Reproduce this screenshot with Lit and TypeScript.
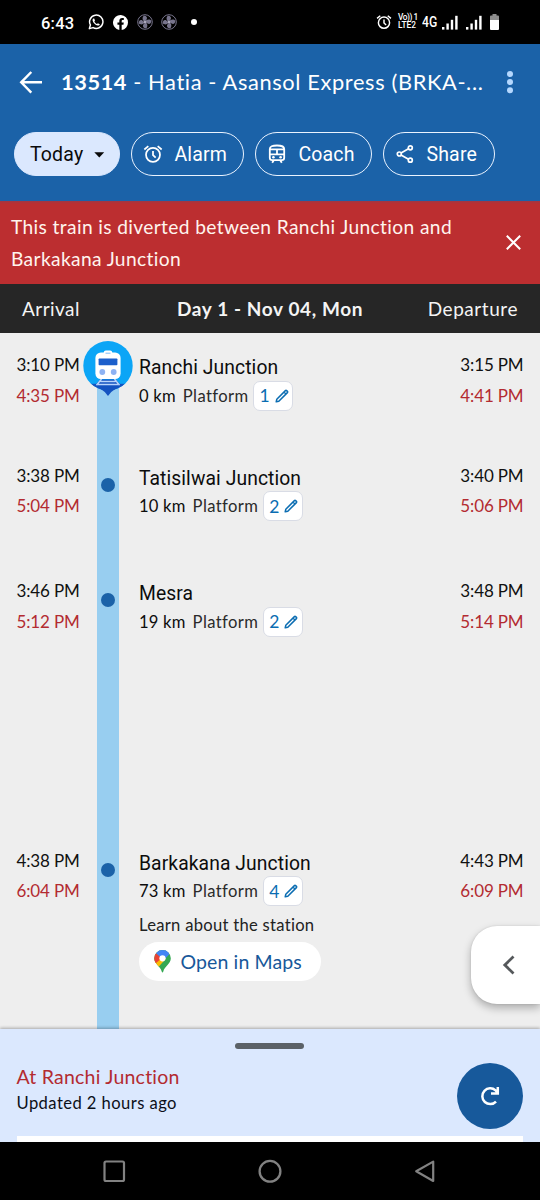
import { LitElement, html, css, svg, nothing } from "lit";
import { customElement, property } from "lit/decorators.js";

interface Stop {
  name: string;
  km: string;
  platform: string;
  arrival: [string, string];
  departure: [string, string];
  size: string;
  current?: boolean;
  maps?: boolean;
}

const STOPS: Stop[] = [
  { name: "Ranchi Junction", km: "0 km", platform: "1", arrival: ["3:10 PM", "4:35 PM"], departure: ["3:15 PM", "4:41 PM"], size: "short", current: true },
  { name: "Tatisilwai Junction", km: "10 km", platform: "2", arrival: ["3:38 PM", "5:04 PM"], departure: ["3:40 PM", "5:06 PM"], size: "mid" },
  { name: "Mesra", km: "19 km", platform: "2", arrival: ["3:46 PM", "5:12 PM"], departure: ["3:48 PM", "5:14 PM"], size: "long" },
  { name: "Barkakana Junction", km: "73 km", platform: "4", arrival: ["4:38 PM", "6:04 PM"], departure: ["4:43 PM", "6:09 PM"], size: "rest", maps: true },
];

const alarmShape = svg`
  <circle cx="12" cy="13" r="8.4"></circle>
  <path d="M12 8.4V13.4L15.2 16.4M1.6 6.6L6.4 2.6M22.4 6.6L17.6 2.6"></path>`;

@customElement("status-bar")
export class StatusBar extends LitElement {
  static styles = css`
    :host { display: flex; height: 44px; background: #000; color: #fff; align-items: center; padding: 0 41px; box-sizing: border-box; font-family: Roboto, sans-serif; }
    svg { display: block; flex: none; }
    .time { font-size: 16.5px; font-weight: 500; width: 47px; letter-spacing: 0.2px; padding-top: 2px; box-sizing: border-box; }
    .fb { margin-left: 9px; }
    .fan { margin-left: 8px; }
    .fb + .fan { margin-left: 9px; }
    .dot { width: 6px; height: 6px; border-radius: 50%; background: #fff; margin-left: 13.5px; }
    .right { margin-left: auto; display: flex; align-items: center; }
    .volte { margin-left: 6px; width: 20px; font: 500 8.3px/7.6px Roboto, sans-serif; white-space: nowrap; }
    .top { letter-spacing: -0.45px; }
    .g4 { margin-left: 4px; width: 20px; font-size: 14.5px; font-weight: 500; transform: scaleX(0.84); transform-origin: left; }
    .sig2 { margin-left: 8px; }
    .bat { margin-left: 8px; }
  `;
  private fan() {
    return html`<svg class="fan" width="16" height="16" viewBox="0 0 16 16">
      <circle cx="8" cy="8" r="7.3" fill="none" stroke="#77748c" stroke-width="1"></circle>
      ${[0, 90, 180, 270].map((a) => svg`<path transform="rotate(${a} 8 8)" d="M8 8C5.4 6.8 4.8 3.2 6.8 1.7C9.3 1.5 10.8 3.5 9.6 5.4C9 6.2 8.3 6.9 8 8Z" fill="#77748c"></path>`)}
      <circle cx="8" cy="8" r="1.3" fill="#aaa7bb"></circle>
    </svg>`;
  }
  private signal(cls: string) {
    return html`<svg class=${cls} width="16" height="15" viewBox="0 0 16 15" fill="#fff">
      <rect x="0" y="12" width="2.4" height="2.6"></rect><rect x="4.4" y="8.5" width="2.4" height="6.1"></rect>
      <rect x="8.8" y="4.8" width="2.4" height="9.8"></rect><rect x="13.2" y="0.8" width="2.4" height="13.8"></rect>
    </svg>`;
  }
  render() {
    return html`
      <span class="time">6:43</span>
      <svg width="16" height="16" viewBox="0 0 24 24">
        <path d="M2 22L3.6 16.4A10 10 0 1 1 7.6 20.4Z" fill="none" stroke="#fff" stroke-width="2.2" stroke-linejoin="round"></path>
        <path d="M8.3 6.6C7.3 7 6.6 8.3 7 10C8 13.5 11 16.5 14.5 17.3C16.2 17.6 17.5 16.6 17.7 15.3L14.8 13.8L13.6 15C11.8 14.4 10.2 12.8 9.5 11.1L10.5 9.8L9.3 6.7Z" fill="#fff"></path>
      </svg>
      <svg class="fb" width="15" height="15" viewBox="0 0 24 24">
        <path fill="#fff" d="M24 12A12 12 0 1 0 10.1 23.9V15.5H7.1V12H10.1V9.4C10.1 6.4 11.9 4.7 14.6 4.7C15.9 4.7 17.3 4.9 17.3 4.9V7.9H15.8C14.3 7.9 13.9 8.8 13.9 9.7V12H17.2L16.7 15.5H13.9V23.9A12 12 0 0 0 24 12Z"></path>
      </svg>
      ${this.fan()}${this.fan()}
      <span class="dot"></span>
      <div class="right">
        <svg width="16" height="16" viewBox="0 0 24 24" fill="none" stroke="#fff" stroke-width="2.2">${alarmShape}</svg>
        <div class="volte"><div class="top">Vo)) 1</div><div>LTE2</div></div>
        <span class="g4">4G</span>
        ${this.signal("sig")}${this.signal("sig2")}
        <svg class="bat" width="9" height="16" viewBox="0 0 9 16">
          <path d="M2.5 0H6.5V1.5H8Q9 1.5 9 2.5V6H0V2.5Q0 1.5 1 1.5H2.5Z" fill="#8b8b8b"></path>
          <path d="M0 6H9V15Q9 16 8 16H1Q0 16 0 15Z" fill="#fff"></path>
        </svg>
      </div>`;
  }
}

@customElement("train-header")
export class TrainHeader extends LitElement {
  static styles = css`
    :host { display: block; height: 157px; background: #1b62a8; box-sizing: border-box; padding: 16px 0 0; color: #fff; }
    svg { display: block; flex: none; }
    .bar { display: flex; align-items: center; height: 44px; padding: 0 20.5px 0 19px; }
    .title { flex: 1; margin: 0 0 1px 18px; font: 400 21.8px/30px Lato, sans-serif; letter-spacing: 0.63px; white-space: nowrap; }
    .title b { letter-spacing: 0.55px; }
    .chips { display: flex; gap: 11px; margin: 28px 0 0 14px; }
    .chip { box-sizing: border-box; height: 44px; border: 1.5px solid #eaf3ff; border-radius: 22px; display: flex; align-items: center; padding-left: 10.5px; font: 400 19.5px/24px Roboto, sans-serif; letter-spacing: 0.15px; }
    .chip span { padding-top: 1.5px; }
    .chip svg { margin-right: 12px; }
    .today { width: 106px; background: #dbe8fe; border-color: #dbe8fe; color: #0a0a0a; padding-left: 15px; }
    .today svg { margin: 1px 0 0 11px; }
    .alarm { width: 113px; }
    .coach { width: 117px; }
    .share { width: 111.5px; }
  `;
  render() {
    return html`
      <div class="bar">
        <svg width="24" height="24" viewBox="0 0 24 24" fill="none" stroke="#fff" stroke-width="2.4"><path d="M23 12.3H2.5M12.3 2L2.2 12.3L12.3 22.6"></path></svg>
        <h1 class="title"><b>13514</b> - Hatia - Asansol Express (BRKA-...</h1>
        <svg width="20" height="26" viewBox="0 0 20 26" fill="#b5d8ff"><circle cx="10" cy="5" r="3"></circle><circle cx="10" cy="13.1" r="3"></circle><circle cx="10" cy="21.3" r="3"></circle></svg>
      </div>
      <div class="chips">
        <div class="chip today"><span>Today</span><svg width="11" height="6" viewBox="0 0 11 6"><path d="M0.3 0.3H10.2L5.3 5.4Z" fill="#0a0a0a"></path></svg></div>
        <div class="chip alarm"><svg width="20" height="20" viewBox="0 0 24 24" fill="none" stroke="#fff" stroke-width="2.1">${alarmShape}</svg><span>Alarm</span></div>
        <div class="chip coach">
          <svg width="20" height="20" viewBox="0 0 20 20" fill="none" stroke="#fff" stroke-width="1.8">
            <path d="M2.8 5C2.8 2.4 5.4 1.5 10 1.5S17.2 2.4 17.2 5V13.8Q17.2 16.2 14.8 16.2H5.2Q2.8 16.2 2.8 13.8ZM2.8 5.4H17.2M2.8 10.3H17.2M10 5.4V10.3M6.8 16.2L5.2 18.8M13.2 16.2L14.8 18.8"></path>
            <circle cx="6.4" cy="13.2" r="1.3" fill="#fff" stroke="none"></circle><circle cx="13.6" cy="13.2" r="1.3" fill="#fff" stroke="none"></circle>
          </svg><span>Coach</span></div>
        <div class="chip share">
          <svg width="20" height="20" viewBox="0 0 20 20" fill="none" stroke="#fff" stroke-width="1.7">
            <circle cx="4.3" cy="10" r="2"></circle><circle cx="15.3" cy="3.8" r="2"></circle><circle cx="15.3" cy="16.2" r="2"></circle>
            <path d="M6 9L13.5 4.8M6 11L13.5 15.2"></path>
          </svg><span>Share</span></div>
      </div>`;
  }
}

@customElement("stop-row")
export class StopRow extends LitElement {
  @property({ attribute: false }) stop!: Stop;
  static styles = css`
    :host { display: block; font-family: Lato, sans-serif; }
    svg { display: block; flex: none; }
    .row { display: grid; grid-template-columns: 96.5px 22px 1fr auto; height: 100%; }
    .times { padding-top: 17px; font-size: 17px; line-height: 30.5px; letter-spacing: -0.15px; color: #111; white-space: nowrap; }
    .arr { padding-left: 16.5px; }
    .dep { padding-right: 16.5px; }
    .late { color: #b32b31; }
    .rail { background: #98cef0; display: flex; justify-content: center; align-items: flex-start; }
    .dot { width: 14px; height: 14px; border-radius: 50%; background: #1b62a8; margin-top: 34px; }
    .first { background: linear-gradient(#eee 30px, #98cef0 30px); }
    .pin { margin: 8px -20px 0; }
    .info { padding: 25px 0 0 20.5px; }
    .name { font: 400 19.3px/20px Roboto, sans-serif; letter-spacing: 0.09px; color: #0c0c0c; margin-bottom: 3px; }
    .meta { display: flex; align-items: center; height: 29px; font-size: 16.6px; letter-spacing: 0.2px; color: #0c0c0c; }
    .plat { letter-spacing: 0.4px; margin: 0 4.5px 0 7px; color: #2a2a2a; }
    .badge { box-sizing: border-box; width: 40px; height: 30px; border: 1.5px solid #d9dce5; border-radius: 7px; background: #fff; color: #0b6db2; font-size: 17.5px; display: flex; align-items: center; justify-content: space-between; padding: 0 3.5px 0 5.5px; }
    .learn { margin-top: 9px; font-size: 16.6px; line-height: 20px; letter-spacing: 0.28px; color: #222; }
    .maps { margin-top: 7px; margin-left: -0.5px; width: 182.5px; height: 39px; border-radius: 20px; background: #fff; display: flex; align-items: center; box-sizing: border-box; padding-left: 15px; color: #17589a; font-size: 19.5px; letter-spacing: 0.12px; }
    .maps svg { margin-right: 10px; }
    .maps span { padding-top: 1px; }
  `;
  private pin() {
    return html`<svg class="pin" width="50" height="56" viewBox="0 0 50 56">
      <defs><clipPath id="disc"><circle cx="25" cy="24.7" r="24.7"></circle></clipPath></defs>
      <circle cx="25" cy="24.7" r="24.7" fill="#0ba5f6"></circle>
      <g clip-path="url(#disc)"><rect x="0" y="42.8" width="50" height="12" fill="#1452c0"></rect></g>
      <path d="M17 47.5H33Q28.5 50 25 55Q21.5 50 17 47.5Z" fill="#1452c0"></path>
      <path d="M17 38.5H33L37.5 44H12.5Z" fill="#1452c0"></path>
      <path d="M18.5 38L13.5 44.3M31.5 38L36.5 44.3M17.3 40.4H32.7M15 43.4H35" stroke="#b9d4fb" stroke-width="1.5" fill="none"></path>
      <rect x="20.8" y="9.6" width="8.4" height="4" rx="2" fill="#fff"></rect>
      <rect x="12.4" y="11.4" width="25.2" height="26.6" rx="5.5" fill="#fff"></rect>
      <rect x="22.5" y="11.6" width="5" height="1.3" fill="#9ecbf5"></rect>
      <rect x="15.6" y="17.5" width="18.8" height="6.8" rx="0.8" fill="#1c5fcb"></rect>
      <circle cx="19.3" cy="31" r="2.9" fill="#8db2f3"></circle><circle cx="30.7" cy="31" r="2.9" fill="#8db2f3"></circle>
    </svg>`;
  }
  render() {
    const s = this.stop;
    return html`<div class="row">
      <div class="times arr"><div>${s.arrival[0]}</div><div class="late">${s.arrival[1]}</div></div>
      <div class="rail ${s.current ? "first" : ""}">${s.current ? this.pin() : html`<span class="dot"></span>`}</div>
      <div class="info">
        <div class="name">${s.name}</div>
        <div class="meta"><span>${s.km}</span><span class="plat">Platform</span>
          <span class="badge">${s.platform}<svg width="14" height="14" viewBox="0 0 14 14" fill="none" stroke="#0b6db2" stroke-width="1.5" stroke-linejoin="round">
            <path d="M1.2 12.8L1.8 10.2L10.4 1.6Q11 1 11.6 1.6L12.4 2.4Q13 3 12.4 3.6L3.8 12.2ZM9 3L11 5"></path></svg></span>
        </div>
        ${s.maps ? html`<div class="learn">Learn about the station</div>
          <div class="maps"><svg width="17" height="23" viewBox="0 0 17 23">
            <defs><clipPath id="drop"><path d="M8.5 0A8.3 8.3 0 0 1 16.8 8.3C16.8 14.3 10.6 16 9.3 21.6Q8.5 23.6 7.7 21.6C6.4 16 0.2 14.3 0.2 8.3A8.3 8.3 0 0 1 8.5 0Z"></path></clipPath></defs>
            <g clip-path="url(#drop)">
              <rect width="17" height="23" fill="#34a853"></rect>
              <path d="M0 13L8.5 5L12 8.5L3.2 18.4L0 17Z" fill="#fbbc04"></path>
              <path d="M0 0L2 2.9L8 8L1.5 13.6L0 12Z" fill="#ea4335"></path>
              <path d="M1.9 3.1L5 0H17V2L14.8 2.9L8.5 9.2Z" fill="#4285f4"></path>
              <path d="M11.3 0L15.6 3.9L10.8 9L8.5 7Z" fill="#4285f4"></path>
            </g>
            <circle cx="8.5" cy="8.3" r="3.1" fill="#fff"></circle>
          </svg><span>Open in Maps</span></div>` : nothing}
      </div>
      <div class="times dep"><div>${s.departure[0]}</div><div class="late">${s.departure[1]}</div></div>
    </div>`;
  }
}

@customElement("app-root")
export class AppRoot extends LitElement {
  static styles = css`
    :host { display: flex; flex-direction: column; width: 540px; height: 1200px; position: relative; overflow: hidden; background: #eee; font-family: Lato, sans-serif; }
    svg { display: block; flex: none; }
    status-bar, train-header { flex: none; }
    .alert { height: 82.5px; flex: none; box-sizing: border-box; background: linear-gradient(#a03743, #bc2e30 3px); color: #fff4ee; display: flex; align-items: center; justify-content: space-between; padding: 0 19px 0 11px; font-size: 19.2px; line-height: 32px; letter-spacing: 0.37px; }
    .alert p { margin: 0; padding-top: 2px; width: 460px; }
    .days { height: 49.5px; flex: none; background: #262626; color: #f4f4f4; display: grid; grid-template-columns: 1fr auto 1fr; align-items: center; padding: 0 22px; font-size: 19px; letter-spacing: 0.45px; }
    .days b { letter-spacing: 0.6px; }
    .dp { text-align: right; letter-spacing: 0.55px; }
    .list { flex: 1; min-height: 0; display: flex; flex-direction: column; overflow: hidden; }
    .short { height: 110.5px; }
    .mid { height: 115.5px; }
    .long { height: 269.5px; }
    .rest { flex: 1; display: grid; }
    .side { position: absolute; right: 0; top: 925.5px; width: 69px; height: 78.5px; box-sizing: border-box; border-radius: 26px 0 0 26px; background: #fff; box-shadow: 0 4px 8px rgba(0,0,0,.28), 0 0 2px rgba(0,0,0,.12); display: flex; align-items: center; padding-left: 30.5px; }
    .sheet { height: 113px; flex: none; box-sizing: border-box; background: #dbe8fe; box-shadow: 0 -1px 3px rgba(0,0,0,.3); position: relative; display: grid; grid-template-rows: 20px 1fr 6px; padding: 0 17px 0 16.5px; }
    .handle { width: 69px; height: 6px; border-radius: 3px; background: #5b6167; justify-self: center; align-self: end; }
    .body { display: flex; justify-content: space-between; align-items: center; padding-top: 6px; }
    .place { padding-bottom: 11px; }
    .at { font-size: 19.5px; line-height: 26px; letter-spacing: 0.22px; color: #b32b31; }
    .upd { font-size: 16.6px; line-height: 26px; letter-spacing: 0.43px; color: #0b0f18; }
    .refresh { width: 66px; height: 66px; border-radius: 50%; background: #17599b; display: grid; place-items: center; }
    .strip { background: #fff; }
    .nav { height: 58px; flex: none; background: #000; display: flex; justify-content: space-between; align-items: center; padding: 0 104px 0 102px; box-sizing: border-box; }
  `;
  render() {
    return html`
      <status-bar></status-bar>
      <train-header></train-header>
      <div class="alert">
        <p>This train is diverted between Ranchi Junction and Barkakana Junction</p>
        <svg width="15" height="15" viewBox="0 0 15 15" stroke="#fff" stroke-width="2"><path d="M0.8 0.8L14.2 14.2M14.2 0.8L0.8 14.2"></path></svg>
      </div>
      <div class="days"><span>Arrival</span><b>Day 1 - Nov 04, Mon</b><span class="dp">Departure</span></div>
      <div class="list">${STOPS.map((s) => html`<stop-row class=${s.size} .stop=${s}></stop-row>`)}</div>
      <div class="side"><svg width="13" height="20" viewBox="0 0 13 20" fill="none" stroke="#55585b" stroke-width="2.8"><path d="M11.5 1.5L2.8 10L11.5 18.5"></path></svg></div>
      <div class="sheet">
        <div class="handle"></div>
        <div class="body">
          <div class="place"><div class="at">At Ranchi Junction</div><div class="upd">Updated 2 hours ago</div></div>
          <div class="refresh"><svg width="20" height="20" viewBox="0 0 20 20" fill="none" stroke="#fff" stroke-width="2.5"><path d="M16 15.6A7.9 7.9 0 1 1 15.6 4.4L18 7.2M17.8 1V7.4H11"></path></svg></div>
        </div>
        <div class="strip"></div>
      </div>
      <div class="nav">
        <svg width="24" height="24" viewBox="0 0 24 24" fill="none" stroke="#828282" stroke-width="2.2"><rect x="2.5" y="2.5" width="19.5" height="19.5" rx="1.5"></rect></svg>
        <svg width="24" height="24" viewBox="0 0 24 24" fill="none" stroke="#828282" stroke-width="2.3"><circle cx="12" cy="12.3" r="10.4"></circle></svg>
        <svg width="22" height="24" viewBox="0 0 22 24" fill="none" stroke="#828282" stroke-width="2.2" stroke-linejoin="round"><path d="M19.2 2.6V22L2.2 12.3Z"></path></svg>
      </div>`;
  }
}
